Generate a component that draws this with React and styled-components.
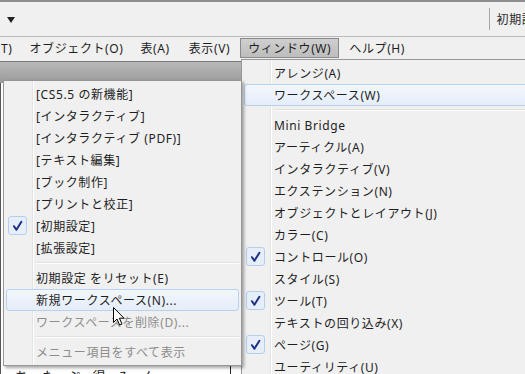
import React from "react";
import styled, { createGlobalStyle } from "styled-components";

const Global = createGlobalStyle`
  html, body { margin: 0; padding: 0; }
  body {
    font-family: "Noto Sans", "Noto Sans CJK JP", sans-serif;
    font-size: 12px;
    letter-spacing: 0.6px;
    color: #1e1e1e;
  }
`;

const Screen = styled.div`
  position: relative;
  width: 525px;
  height: 374px;
  overflow: hidden;
  background: #f0f0f0;
  display: flex;
  flex-direction: column;
`;

const Toolbar = styled.div`
  height: 34px;
  flex: none;
  border-top: 2px solid #8e8e8e;
  border-bottom: 1px solid #b9b9b9;
  display: flex;
  align-items: center;
  padding-left: 7px;
`;

const DropArrow = styled.span`
  width: 0;
  height: 0;
  border-left: 4px solid transparent;
  border-right: 4px solid transparent;
  border-top: 6px solid #222;
  margin-top: 2px;
`;

const Spacer = styled.div`
  flex: 1;
`;

const VSep = styled.div`
  width: 1px;
  height: 22px;
  background: #a8a8a8;
`;

const PresetLabel = styled.span`
  margin-left: 7px;
  margin-right: -22px;
  white-space: nowrap;
  color: #2a2a2a;
`;

const MenuBar = styled.div`
  height: 24px;
  flex: none;
  display: flex;
  align-items: flex-start;
  padding-top: 1px;
  box-sizing: border-box;
`;

const BarItem = styled.div`
  height: 20px;
  line-height: 19px;
  padding: 0 ${(p) => (p.$first ? "8px 0 0" : "7px")};
  box-sizing: border-box;
  white-space: nowrap;
  border: 1px solid ${(p) => (p.$open ? "#8a8a8a" : "transparent")};
  background: ${(p) => (p.$open ? "linear-gradient(#cfcfcf, #bdbdbd)" : "transparent")};
  margin-right: ${(p) => (p.$gap ? p.$gap : 0)}px;
`;

const Workspace = styled.div`
  flex: 1;
  display: flex;
  min-height: 0;
`;

const LeftPanel = styled.div`
  width: 241px;
  display: flex;
  flex-direction: column;
`;

const PanelHeader = styled.div`
  height: 21px;
  flex: none;
  border-top: 1px solid #7a7a7a;
  background: linear-gradient(#b9b9b9, #9a9a9a);
`;

const PanelBody = styled.div`
  flex: 1;
  background: #fff;
  border-left: 1px solid #555;
  display: flex;
  flex-direction: column;
  justify-content: flex-end;
  position: relative;
  overflow: hidden;
`;

const DocLine = styled.div`
  font-family: "Noto Sans CJK JP", sans-serif;
  font-size: 13px;
  line-height: 16px;
  margin: 0 0 -10px 14px;
  word-spacing: 8px;
  color: #222;
  white-space: nowrap;
`;

const Frame = styled.div`
  position: absolute;
  left: 229px;
  bottom: 0;
  width: 1px;
  height: 14px;
  background: #222;
`;

const Menu = styled.div`
  position: absolute;
  left: ${(p) => p.$left}px;
  top: ${(p) => p.$top}px;
  width: ${(p) => p.$width}px;
  ${(p) => (p.$bottom !== undefined ? `bottom: ${p.$bottom}px;` : "")}
  border: 1px solid #979797;
  padding: 2px;
  background:
    linear-gradient(to right,
      #f0f0f0 0 28px,
      #e2e3e3 28px 29px,
      #ffffff 29px 30px,
      #f0f0f0 30px);
  box-shadow: ${(p) => (p.$shadow ? "2px 2px 3px rgba(0,0,0,0.35)" : "none")};
  box-sizing: border-box;
  z-index: ${(p) => p.$z || 1};
`;

const Row = styled.div`
  position: relative;
  height: 22px;
  line-height: 21px;
  padding-left: 29px;
  white-space: nowrap;
  color: ${(p) => (p.$disabled ? "#8d8d8d" : "#1e1e1e")};
  border: 1px solid ${(p) => (p.$hot ? "#b6d2f2" : "transparent")};
  border-radius: 3px;
  box-sizing: border-box;
  background: ${(p) =>
    p.$hot ? "linear-gradient(#f3f7fc, #e4edf9)" : "transparent"};
`;

const Separator = styled.div`
  height: 8px;
  margin-left: 30px;
  position: relative;
  &::after {
    content: "";
    position: absolute;
    left: 0;
    right: 0;
    top: 3px;
    height: 1px;
    background: #e0e0e0;
    border-bottom: 1px solid #fff;
  }
`;

const CheckBox = styled.span`
  position: absolute;
  left: 1px;
  top: 0;
  width: 19px;
  height: 19px;
  border: 1px solid #b4cfee;
  border-radius: 3px;
  background: #e6eefa;
  box-sizing: border-box;
  display: flex;
  align-items: center;
  justify-content: center;
`;

const Cursor = styled.svg`
  position: absolute;
  left: 112px;
  top: 306px;
  z-index: 5;
`;

const Check = () => (
  <CheckBox>
    <svg width="11" height="12" viewBox="0 0 11 12">
      <path
        d="M2 6.2 L4.4 9.8 L9.4 1.8"
        fill="none"
        stroke="#1f2f86"
        strokeWidth="2"
        strokeLinecap="round"
        strokeLinejoin="round"
      />
    </svg>
  </CheckBox>
);

const Item = ({ label, checked, hot, disabled }) => (
  <Row $hot={hot} $disabled={disabled}>
    {checked && <Check />}
    {label}
  </Row>
);

const windowItems = [
  { label: "アレンジ(A)" },
  { label: "ワークスペース(W)", hot: true },
  { sep: true },
  { label: "Mini Bridge" },
  { label: "アーティクル(A)" },
  { label: "インタラクティブ(V)" },
  { label: "エクステンション(N)" },
  { label: "オブジェクトとレイアウト(J)" },
  { label: "カラー(C)" },
  { label: "コントロール(O)", checked: true },
  { label: "スタイル(S)" },
  { label: "ツール(T)", checked: true },
  { label: "テキストの回り込み(X)" },
  { label: "ページ(G)", checked: true },
  { label: "ユーティリティ(U)" },
];

const workspaceItems = [
  { label: "[CS5.5 の新機能]" },
  { label: "[インタラクティブ]" },
  { label: "[インタラクティブ (PDF)]" },
  { label: "[テキスト編集]" },
  { label: "[ブック制作]" },
  { label: "[プリントと校正]" },
  { label: "[初期設定]", checked: true },
  { label: "[拡張設定]" },
  { sep: true },
  { label: "初期設定 をリセット(E)" },
  { label: "新規ワークスペース(N)...", hot: true },
  { label: "ワークスペースを削除(D)...", disabled: true },
  { sep: true },
  { label: "メニュー項目をすべて表示", disabled: true },
];

const renderItems = (items) =>
  items.map((it, i) =>
    it.sep ? <Separator key={i} /> : <Item key={i} {...it} />
  );

export default function App() {
  return (
    <>
      <Global />
      <Screen>
        <Toolbar>
          <DropArrow />
          <Spacer />
          <VSep />
          <PresetLabel>初期設定</PresetLabel>
        </Toolbar>
        <MenuBar>
          <BarItem $first>T)</BarItem>
          <BarItem $gap={1}>オブジェクト(O)</BarItem>
          <BarItem $gap={3}>表(A)</BarItem>
          <BarItem $gap={2}>表示(V)</BarItem>
          <BarItem $open $gap={2}>ウィンドウ(W)</BarItem>
          <BarItem>ヘルプ(H)</BarItem>
        </MenuBar>
        <Workspace>
          <LeftPanel>
            <PanelHeader />
            <PanelBody>
              <DocLine>ち　た ぷ 得 み ん</DocLine>
              <Frame />
            </PanelBody>
          </LeftPanel>
        </Workspace>

        <Menu $left={241} $top={59} $width={300} $bottom={-20}>
          {renderItems(windowItems)}
        </Menu>

        <Menu $left={3} $top={80} $width={239} $shadow $z={2}>
          {renderItems(workspaceItems)}
        </Menu>

        <Cursor width="14" height="21" viewBox="0 0 14 21">
          <path
            d="M1.5 1.5 L1.5 16.5 L5 13 L7.6 19 L10 18 L7.4 12.2 L12 12.2 Z"
            fill="#fff"
            stroke="#000"
            strokeWidth="1"
            strokeLinejoin="miter"
          />
        </Cursor>
      </Screen>
    </>
  );
}
